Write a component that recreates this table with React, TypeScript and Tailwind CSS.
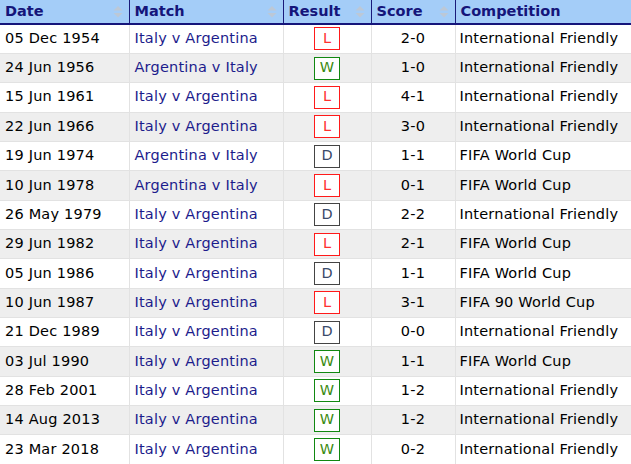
import React from 'react';

type Row = { date: string; match: string; result: 'W' | 'D' | 'L'; score: string; comp: string };

const rows: Row[] = [
  { date: '05 Dec 1954', match: 'Italy v Argentina', result: 'L', score: '2-0', comp: 'International Friendly' },
  { date: '24 Jun 1956', match: 'Argentina v Italy', result: 'W', score: '1-0', comp: 'International Friendly' },
  { date: '15 Jun 1961', match: 'Italy v Argentina', result: 'L', score: '4-1', comp: 'International Friendly' },
  { date: '22 Jun 1966', match: 'Italy v Argentina', result: 'L', score: '3-0', comp: 'International Friendly' },
  { date: '19 Jun 1974', match: 'Argentina v Italy', result: 'D', score: '1-1', comp: 'FIFA World Cup' },
  { date: '10 Jun 1978', match: 'Argentina v Italy', result: 'L', score: '0-1', comp: 'FIFA World Cup' },
  { date: '26 May 1979', match: 'Italy v Argentina', result: 'D', score: '2-2', comp: 'International Friendly' },
  { date: '29 Jun 1982', match: 'Italy v Argentina', result: 'L', score: '2-1', comp: 'FIFA World Cup' },
  { date: '05 Jun 1986', match: 'Italy v Argentina', result: 'D', score: '1-1', comp: 'FIFA World Cup' },
  { date: '10 Jun 1987', match: 'Italy v Argentina', result: 'L', score: '3-1', comp: 'FIFA 90 World Cup' },
  { date: '21 Dec 1989', match: 'Italy v Argentina', result: 'D', score: '0-0', comp: 'International Friendly' },
  { date: '03 Jul 1990', match: 'Italy v Argentina', result: 'W', score: '1-1', comp: 'FIFA World Cup' },
  { date: '28 Feb 2001', match: 'Italy v Argentina', result: 'W', score: '1-2', comp: 'International Friendly' },
  { date: '14 Aug 2013', match: 'Italy v Argentina', result: 'W', score: '1-2', comp: 'International Friendly' },
  { date: '23 Mar 2018', match: 'Italy v Argentina', result: 'W', score: '0-2', comp: 'International Friendly' },
];

const badgeStyles: Record<Row['result'], string> = {
  W: 'border-[#118811] text-[#3a8a10]',
  D: 'border-[#444444] text-[#3a4a6a]',
  L: 'border-[#ff1a1a] text-[#ff3030]',
};

function SortArrows() {
  return (
    <svg width="10" height="12" viewBox="0 0 10 12" className="shrink-0">
      <path d="M5 0 L9.5 4.5 L0.5 4.5 Z" fill="#bcc8d6" />
      <path d="M0.5 7 L9.5 7 L5 11.5 Z" fill="#bcc8d6" />
    </svg>
  );
}

function HeadCell({ label, width, sortable = true, last = false }: { label: string; width: string; sortable?: boolean; last?: boolean }) {
  return (
    <th className={`${width} p-0 font-bold text-left ${last ? '' : 'border-r border-[#1a1a7a]'}`}>
      <div className="flex items-center justify-between h-[23px] pl-[5px] pr-[6px] pt-px">
        <span>{label}</span>
        {sortable && <SortArrows />}
      </div>
    </th>
  );
}

export default function App() {
  return (
    <div className="w-[631px] h-[464px] overflow-hidden bg-white" style={{ fontFamily: '"DejaVu Sans", Verdana, sans-serif' }}>
      <table className="w-full border-collapse table-fixed text-[14.5px]">
        <thead>
          <tr className="bg-[#a4cdf8] text-[#15157a] border-b-2 border-[#15157a]">
            <HeadCell label="Date" width="w-[129px]" />
            <HeadCell label="Match" width="w-[154px]" />
            <HeadCell label="Result" width="w-[88px]" />
            <HeadCell label="Score" width="w-[84px]" />
            <HeadCell label="Competition" width="w-auto" sortable={false} last />
          </tr>
        </thead>
        <tbody className="tracking-[0.2px]">
          {rows.map((r, i) => (
            <tr key={i} className={`h-[29.35px] border-b border-[#e2e2e2] ${i % 2 ? 'bg-[#eeeeee]' : 'bg-white'}`}>
              <td className="px-[5px] py-0 text-black border-r border-[#e2e2e2] whitespace-nowrap">{r.date}</td>
              <td className="px-[5px] py-0 text-[#1c1c8c] border-r border-[#e2e2e2] whitespace-nowrap">{r.match}</td>
              <td className="p-0 border-r border-[#e2e2e2]">
                <div className="flex justify-center">
                  <span className={`flex items-center justify-center w-[26px] h-[23px] border bg-white tracking-normal ${badgeStyles[r.result]}`}>
                    {r.result}
                  </span>
                </div>
              </td>
              <td className="p-0 text-center text-black border-r border-[#e2e2e2]">{r.score}</td>
              <td className="px-[4px] py-0 text-black whitespace-nowrap">{r.comp}</td>
            </tr>
          ))}
        </tbody>
      </table>
    </div>
  );
}
